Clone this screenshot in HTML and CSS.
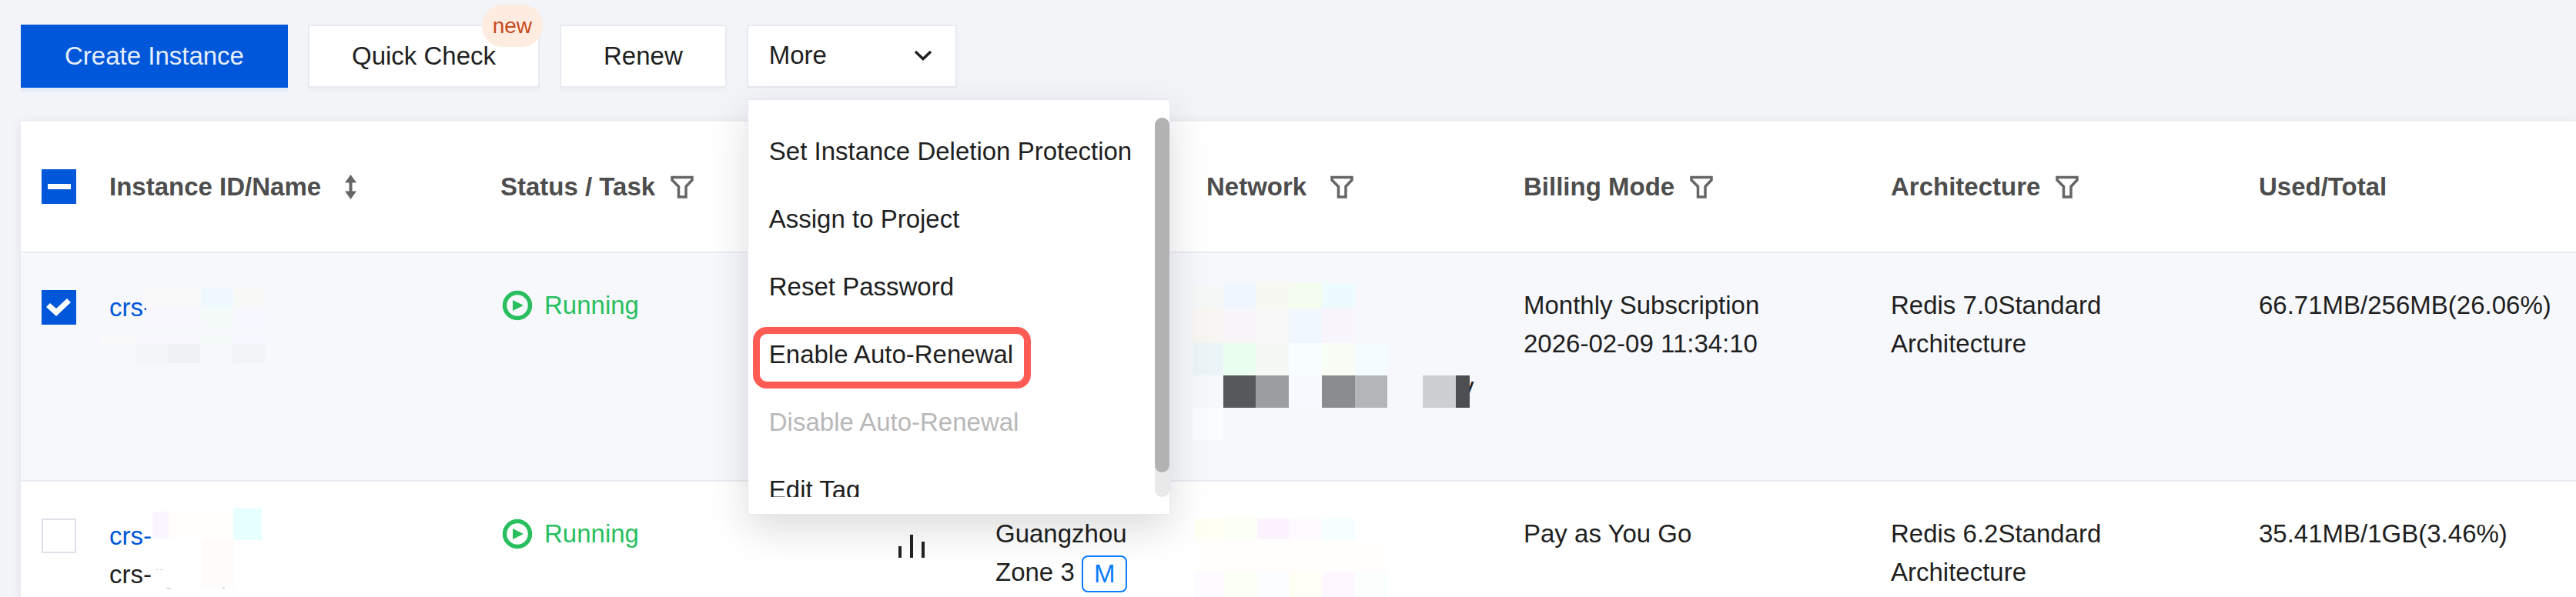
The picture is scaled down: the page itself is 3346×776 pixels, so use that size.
FILE: index.html
```html
<!DOCTYPE html>
<html lang="en">
<head>
<meta charset="utf-8">
<title>Instance List</title>
<link rel="stylesheet" href="styles.css">
</head>
<body>
<svg class="symbols" aria-hidden="true">
  <symbol id="filter" viewBox="0 0 30 30">
    <path d="M2 2.500H28V6L20 14.500V28H10.500V14.500L2 6Z" fill="none" stroke="#666" stroke-width="3.500"/>
  </symbol>
  <symbol id="running" viewBox="0 0 43 40">
    <circle cx="22" cy="20" r="16.500" fill="none" stroke="#29bf5f" stroke-width="5.500"/>
    <path d="M16 13L30 20L16 27Z" fill="#29bf5f"/>
  </symbol>
</svg>

<nav class="toolbar" aria-label="Instance actions">
  <button class="btn btn-primary" type="button">Create Instance</button>
  <button class="btn" type="button">Quick Check<span class="tag-new">new</span></button>
  <button class="btn" type="button">Renew</button>
  <div class="dropdown">
    <button class="btn btn-more" type="button" aria-expanded="true">More
      <svg class="chevron" viewBox="0 0 24 14"><path d="M2 2L12 11.500L22 2" fill="none" stroke="#222" stroke-width="3.500"/></svg>
    </button>
    <div class="menu">
      <div class="menu-view">
        <ul class="menu-list">
          <li><button class="menu-item" type="button">Set Instance Deletion Protection</button></li>
          <li><button class="menu-item" type="button">Assign to Project</button></li>
          <li><button class="menu-item" type="button">Reset Password</button></li>
          <li><button class="menu-item" type="button"><span class="marked">Enable Auto-Renewal</span></button></li>
          <li><button class="menu-item" type="button" disabled>Disable Auto-Renewal</button></li>
          <li><button class="menu-item" type="button">Edit Tag</button></li>
        </ul>
        <div class="track"><div class="thumb"></div></div>
      </div>
    </div>
  </div>
</nav>

<main class="card">
  <table class="grid">
    <colgroup>
      <col class="c-check"><col class="c-name"><col class="c-status"><col class="c-monitor"><col class="c-zone"><col class="c-network"><col class="c-billing"><col class="c-arch"><col>
    </colgroup>
    <thead>
      <tr>
        <th class="check"><input class="box box-mixed" type="checkbox" aria-label="Select all"></th>
        <th><div class="head head-wide">Instance ID/Name
          <button class="icon-btn" type="button" aria-label="Sort"><svg class="sort" viewBox="0 0 15 32"><path d="M7.500 0L15 10.500H9.500V21.500H15L7.500 32L0 21.500H5.500V10.500H0Z" fill="#666"/></svg></button></div></th>
        <th><div class="head">Status / Task
          <button class="icon-btn" type="button" aria-label="Filter status"><svg class="filter"><use href="#filter"/></svg></button></div></th>
        <th></th>
        <th></th>
        <th><div class="head head-wide">Network
          <button class="icon-btn" type="button" aria-label="Filter network"><svg class="filter"><use href="#filter"/></svg></button></div></th>
        <th><div class="head">Billing Mode
          <button class="icon-btn" type="button" aria-label="Filter billing mode"><svg class="filter"><use href="#filter"/></svg></button></div></th>
        <th><div class="head">Architecture
          <button class="icon-btn" type="button" aria-label="Filter architecture"><svg class="filter"><use href="#filter"/></svg></button></div></th>
        <th>Used/Total</th>
      </tr>
    </thead>
    <tbody>
      <tr class="selected">
        <td class="check"><input class="box" type="checkbox" checked aria-label="Select instance 1"></td>
        <td class="name">
          <a href="#">crs-</a>
          <svg class="mosaic" viewBox="122 329 508 295" shape-rendering="crispEdges">
            <path fill="#f8f9f8" d="M190 375H261V399H190ZM130 435H176V447H130Z"/>
            <path fill="#eff8ff" d="M261 375H303V399H261Z"/>
            <path fill="#f8f8f7" d="M303 375H344V399H303Z"/>
            <path fill="#f8f7fd" d="M190 399H261V423H190ZM176 435H260V447H176Z"/>
            <path fill="#f4faf7" d="M261 399H303V423H261ZM260 435H302V447H260Z"/>
            <path fill="#f6f7ff" d="M303 399H344V425H303ZM302 435H344V447H302Z"/>
            <path fill="#f4f5f8" d="M176 447H218V472H176Z"/>
            <path fill="#f0f1f5" d="M218 447H260V472H218Z"/>
            <path fill="#f3f4f7" d="M302 447H344V472H302Z"/>
          </svg>
        </td>
        <td><div class="status"><svg class="run"><use href="#running"/></svg>Running</div></td>
        <td></td>
        <td></td>
        <td>
          <svg class="mosaic" viewBox="1547 329 412 295" shape-rendering="crispEdges">
            <text class="mosaic-text" x="1898" y="514">y</text>
            <path fill="#f5f8f6" d="M1549 368h40v33h-40z"/><path fill="#eff6ff" d="M1589 368h42v33h-42z"/><path fill="#f8f8f3" d="M1631 368h43v33h-43z"/><path fill="#f3fcee" d="M1674 368h43v33h-43z"/><path fill="#edfafe" d="M1717 368h43v33h-43z"/>
            <path fill="#f8f6f3" d="M1549 401h40v45h-40z"/><path fill="#f8f6f9" d="M1589 401h42v45h-42z"/><path fill="#f7f8f7" d="M1631 401h43v45h-43z"/><path fill="#f1f7ff" d="M1674 401h43v45h-43z"/><path fill="#f8f6fc" d="M1717 401h43v45h-43z"/>
            <path fill="#ebf5f8" d="M1549 446h40v42h-40z"/><path fill="#ebfff0" d="M1589 446h42v42h-42z"/><path fill="#f4f9f6" d="M1631 446h43v42h-43z"/><path fill="#f8fdff" d="M1674 446h43v42h-43z"/><path fill="#f8fef6" d="M1717 446h43v42h-43z"/><path fill="#f5fcff" d="M1760 446h42v42h-42z"/>
            <path fill="#57585b" d="M1589 488h42v42h-42z"/><path fill="#9c9da0" d="M1631 488h43v42h-43z"/><path fill="#f8f9fe" d="M1674 488h43v42h-43z"/><path fill="#8b8c8f" d="M1717 488h43v42h-43z"/><path fill="#b4b5b9" d="M1760 488h42v42h-42z"/>
            <path fill="#cecfd3" d="M1848 488h43v42h-43z"/><path fill="#4d4e52" d="M1891 488h18v42h-18z"/>
            <path fill="#fbfcff" d="M1549 530h40v42h-40z"/>
          </svg>
        </td>
        <td>Monthly Subscription<br>2026-02-09 11:34:10</td>
        <td>Redis 7.0Standard Architecture</td>
        <td>66.71MB/256MB(26.06%)</td>
      </tr>
      <tr class="last">
        <td class="check"><input class="box" type="checkbox" aria-label="Select instance 2"></td>
        <td class="name">
          <a href="#">crs-</a><br>crs-
          <svg class="mosaic" viewBox="122 626 508 150" shape-rendering="crispEdges">
            <path fill="#fbf5ff" d="M198 665h21v35h-21z"/>
            <path fill="#fffefa" d="M219 665h84v35h-84z"/>
            <path fill="#e6ffff" d="M303 661h37v41h-37z"/>
            <path fill="#fdfcfb" d="M262 700h42v64h-42z"/>
            <path fill="#ddd" d="M202 740h4v1h-4zM208 740h4v1h-4z"/>
            <path fill="#bbb" d="M216 764h6v1h-6zM289 764h3v1h-3z"/>
          </svg>
        </td>
        <td><div class="status"><svg class="run"><use href="#running"/></svg>Running</div></td>
        <td><svg class="bars" viewBox="0 0 34 30"><path d="M0 15h4v15h-4zM15 0h4v30h-4zM30 9h4v21h-4z" fill="#222"/></svg></td>
        <td>Guangzhou Zone 3 <span class="badge">M</span></td>
        <td>
          <svg class="mosaic" viewBox="1547 626 412 150" shape-rendering="crispEdges">
            <path fill="#fffff3" d="M1552 674h38v27h-38z"/><path fill="#fbfff5" d="M1590 674h43v27h-43z"/><path fill="#fdf3ff" d="M1633 674h42v27h-42z"/><path fill="#fdfbff" d="M1675 674h42v27h-42z"/><path fill="#f5ffff" d="M1717 674h43v27h-43z"/>
            <path fill="#fffefc" d="M1552 702h250v41h-250z"/>
            <path fill="#fdfbff" d="M1552 744h38v32h-38z"/><path fill="#fbfff6" d="M1590 744h43v32h-43z"/><path fill="#fbfdff" d="M1633 744h42v32h-42z"/><path fill="#fffff5" d="M1675 744h42v32h-42z"/><path fill="#fff7ff" d="M1717 744h43v32h-43z"/><path fill="#fafffe" d="M1760 744h42v32h-42z"/>
          </svg>
        </td>
        <td>Pay as You Go</td>
        <td>Redis 6.2Standard Architecture</td>
        <td>35.41MB/1GB(3.46%)</td>
      </tr>
    </tbody>
  </table>
</main>
</body>
</html>
```

FILE: styles.css
```css
* { box-sizing: border-box; }

body {
  margin: 0;
  background: #f2f4f8;
  color: #1f1f1f;
  font-family: "Liberation Sans", Arial, sans-serif;
  font-size: 33px;
  line-height: 50px;
}

button {
  font: inherit;
  color: inherit;
  cursor: pointer;
}

svg { display: block; }

.symbols {
  position: absolute;
  width: 0;
  height: 0;
}

/* Toolbar */
.toolbar {
  display: flex;
  gap: 26px;
  padding: 32px 0 44px 27px;
}

.btn {
  position: relative;
  height: 82px;
  padding: 0 55px;
  border: 2px solid #e7eaf0;
  background: #fff;
  box-shadow: 0 5px 0 rgba(0, 0, 0, 0.016);
  white-space: nowrap;
}

.btn-primary {
  border-color: #0057d9;
  background: #0057d9;
  box-shadow: 0 5px 0 #e5ecf6;
  color: #e6eefb;
}

.tag-new {
  position: absolute;
  top: -28px;
  right: -6px;
  padding: 0 14px;
  border-radius: 28px;
  background: #ffece0;
  color: #c94a1c;
  font-size: 28px;
  line-height: 55px;
}

.dropdown {
  position: relative;
  z-index: 1;
}

.btn-more {
  display: flex;
  align-items: center;
  justify-content: space-between;
  min-width: 273px;
  padding: 0 30px 3px 27px;
  box-shadow: none;
}

.chevron {
  width: 24px;
  height: 14px;
}

.menu {
  position: absolute;
  top: 97px;
  left: 1px;
  padding: 23px 0 22px;
  border: 1px solid #e6e8f2;
  background: #fff;
  box-shadow: 0 18px 50px rgba(0, 0, 0, 0.14);
}

.menu-view {
  position: relative;
  height: 493px;
  overflow: hidden;
}

.menu-list {
  margin: 0;
  padding: 0;
  list-style: none;
}

.menu-item {
  display: block;
  width: 100%;
  height: 88px;
  padding: 0 49px 0 27px;
  border: 0;
  background: none;
  text-align: left;
  white-space: nowrap;
}

.menu-item:disabled { color: #b8b8b8; }

.marked { position: relative; }

.marked::after {
  content: "";
  position: absolute;
  inset: -17px -23px -26px -21px;
  border: 9px solid #ff5b55;
  border-radius: 18px;
}

.track {
  position: absolute;
  top: 0;
  right: 0;
  width: 19px;
  height: 100%;
  border-radius: 10px;
  background: #e9e9e9;
}

.thumb {
  height: 461px;
  border-radius: 10px;
  background: #b2b2b2;
}

/* Instance table */
.card {
  margin-left: 27px;
  background: #fff;
  box-shadow: 0 2px 12px rgba(54, 58, 80, 0.1);
}

.grid {
  width: 100%;
  table-layout: fixed;
  border-spacing: 0;
}

.c-check { width: 95px; }
.c-name { width: 508px; }
.c-status { width: 517px; }
.c-monitor { width: 126px; }
.c-zone { width: 274px; }
.c-network { width: 412px; }
.c-billing { width: 477px; }
.c-arch { width: 478px; }

th,
td {
  position: relative;
  border-bottom: 2px solid #e9ecf1;
  text-align: left;
}

th {
  height: 171px;
  padding: 0 20px;
  color: #4d4d4d;
  vertical-align: middle;
}

td {
  height: 297px;
  padding: 43px 20px 0;
  vertical-align: top;
}

.selected td { background: #f7f8fc; }

.last td {
  height: 150px;
  border-bottom: 0;
}

td.name { padding-top: 46px; }

.name a {
  color: #0057d9;
  text-decoration: none;
}

th.check { padding: 0 0 0 27px; }
td.check { padding: 48px 0 0 27px; }

.box {
  display: block;
  appearance: none;
  width: 45px;
  height: 45px;
  margin: 0;
  border: 2px solid #dde1ea;
  background: #fff;
}

.box:checked,
.box-mixed {
  border: 0;
  background: #0057d9;
}

.box:checked::after,
.box-mixed::after {
  content: "";
  display: block;
  width: 45px;
  height: 45px;
  background: #fff;
}

.box:checked::after { clip-path: polygon(6px 22px, 11px 17px, 19px 24px, 33px 11px, 38px 16px, 19px 34px); }
.box-mixed::after { clip-path: inset(19px 7px 19px 8px); }

.head {
  display: flex;
  align-items: center;
  gap: 20px;
  white-space: nowrap;
}

.head-wide { gap: 31px; }

.icon-btn {
  padding: 0;
  border: 0;
  background: none;
}

.filter {
  width: 30px;
  height: 30px;
}

.sort {
  width: 15px;
  height: 32px;
}

.status {
  display: flex;
  align-items: center;
  gap: 14px;
  color: #29bf5f;
}

.run {
  width: 43px;
  height: 40px;
}

.bars {
  width: 34px;
  height: 30px;
  margin-top: 26px;
}

.badge {
  display: inline-block;
  padding: 0 14px;
  border: 2px solid #0a7cff;
  border-radius: 8px;
  color: #0a7cff;
  line-height: 44px;
  vertical-align: middle;
}

.mosaic {
  position: absolute;
  top: 0;
  left: 0;
  width: 100%;
  height: 295px;
}

.last .mosaic { height: 150px; }

.mosaic-text { fill: #1f1f1f; }
```
